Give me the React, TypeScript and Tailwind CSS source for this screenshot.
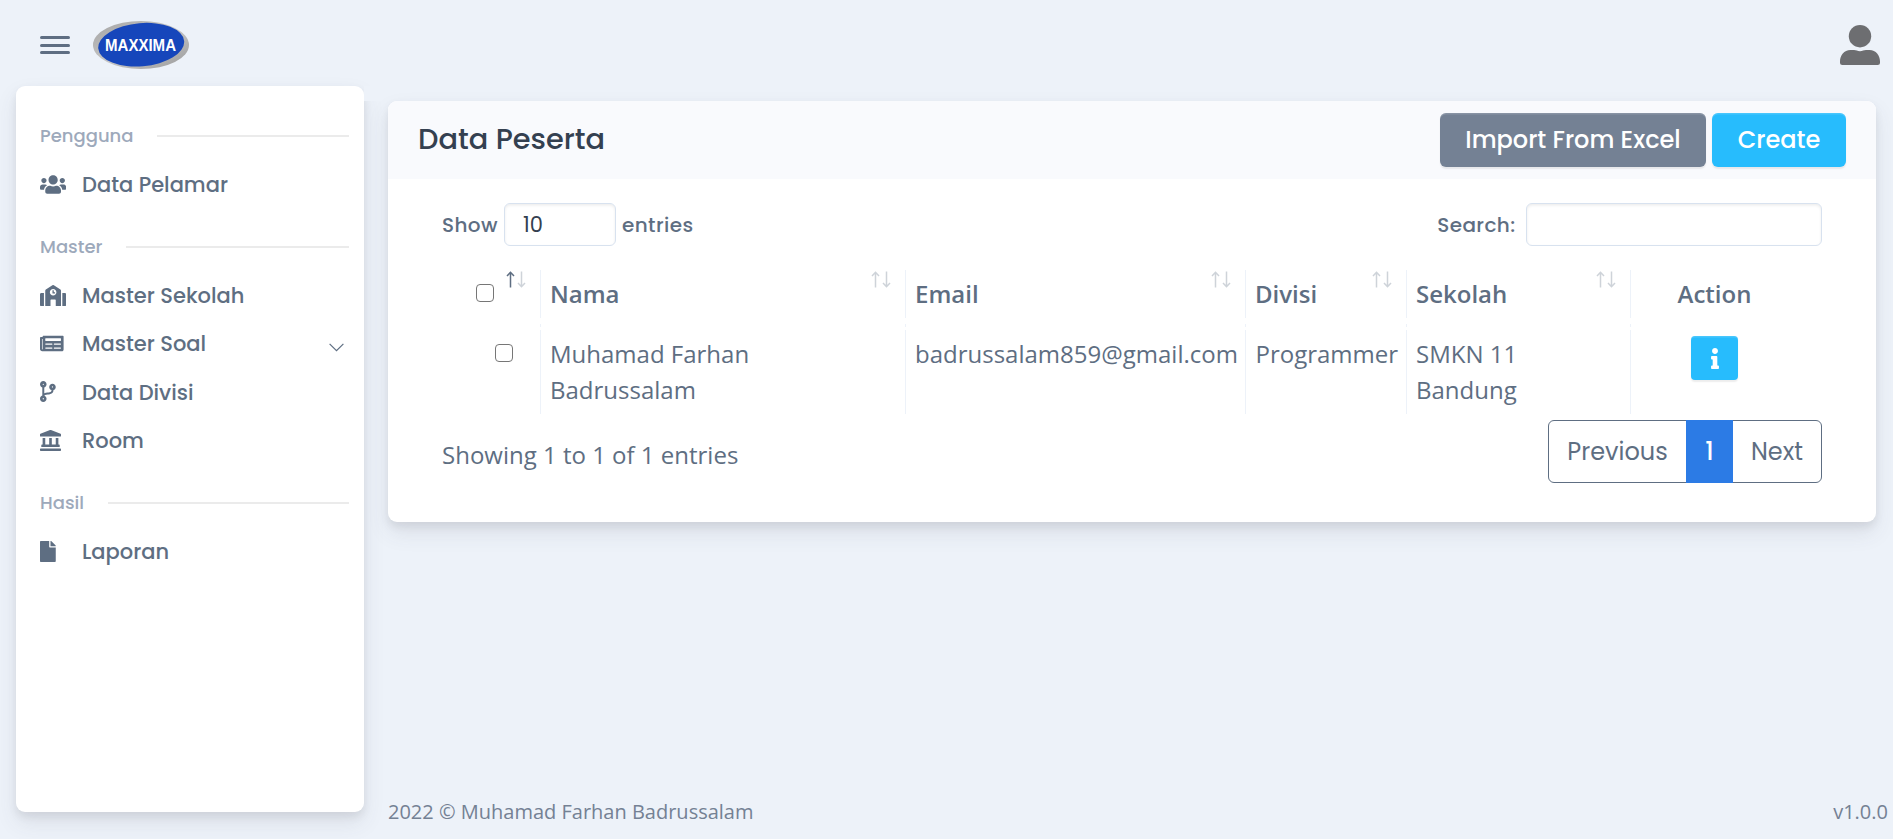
import React from "react";
import type { IconType } from "react-icons";
import { FaUsers, FaSchool, FaNewspaper, FaCodeBranch, FaLandmark, FaFile, FaInfo } from "react-icons/fa";

const display = "font-['Poppins','Inter',sans-serif]";

function Logo() {
  return (
    <svg width="96" height="48" viewBox="0 0 96 48">
      <defs>
        <linearGradient id="ring" x1="0" y1="0" x2="1" y2="1">
          <stop offset="0" stopColor="#a3a3a3" />
          <stop offset="0.5" stopColor="#c6c6c6" />
          <stop offset="1" stopColor="#9a9a9a" />
        </linearGradient>
      </defs>
      <ellipse cx="48" cy="24" rx="48" ry="24" fill="url(#ring)" />
      <ellipse cx="48.2" cy="23.7" rx="43.1" ry="21.6" transform="rotate(-5 48.2 23.7)" fill="#1646bb" />
      <text x="47.5" y="29.6" textAnchor="middle" fill="#fff" fontFamily="Liberation Sans, sans-serif" fontWeight="700" fontSize="15.6" textLength="71" lengthAdjust="spacingAndGlyphs">
        MAXXIMA
      </text>
    </svg>
  );
}

function NavLabel({ text }: { text: string }) {
  return (
    <div className="flex h-[30px] items-center">
      <span className="text-[18px] font-medium text-[#9da9bb]">{text}</span>
      <span className="ml-6 h-[2px] grow bg-[#ebebeb]" />
    </div>
  );
}

function NavItem({ icon: Icon, text, size, open }: { icon: IconType; text: string; size: string; open?: boolean }) {
  return (
    <div className="flex h-[48.33px] items-center text-[#5e6e82]">
      <span className="mb-[2px] w-[42px] shrink-0">
        <Icon className={`h-[21px] ${size}`} />
      </span>
      <span className="text-[21px] font-medium">{text}</span>
      {open && (
        <svg className="mt-[6px] mr-[5px] ml-auto" width="15" height="9" viewBox="0 0 15 9" fill="none" stroke="currentColor" strokeWidth="1.2">
          <path d="M.6.8 7.5 7.7 14.4.8" />
        </svg>
      )}
    </div>
  );
}

function Sort({ active }: { active?: boolean }) {
  return (
    <svg className="absolute top-px right-[14px]" width="20" height="17" viewBox="0 0 20 17" fill="none" stroke="#5e6e82" strokeWidth="1.5">
      <path d="M4.5 16.5V1.5M1 5 4.5 1.3 8 5" opacity={active ? 1 : 0.3} />
      <path d="M15.5 .5V15.5M12 12 15.5 15.7 19 12" opacity="0.3" />
    </svg>
  );
}

const cols = "grid grid-cols-[99px_365px_340px_161px_224px_167px]";
const cell = "relative border-r border-[#edf2f9] py-[6px] pl-[9px]";
const box = "block h-[18px] w-[18px] appearance-none rounded-[4px] border-[1.5px] border-[#767676] bg-white";

function Header({ text }: { text: string }) {
  return (
    <div className={cell}>
      {text}
      <Sort />
    </div>
  );
}

export default function App() {
  return (
    <div className="flex h-[839px] w-[1893px] flex-col overflow-hidden bg-[#edf2f9] font-['Open_Sans',sans-serif] text-[24px] leading-[36px] text-[#5e6e82]">
      <header className="flex h-[86px] shrink-0 items-start pr-[13px] pl-10">
        <button className="mt-9 flex h-[18px] w-[30px] flex-col justify-between">
          <span className="h-[3px] w-full rounded-full bg-[#5e6e82]" />
          <span className="h-[3px] w-full rounded-full bg-[#5e6e82]" />
          <span className="h-[3px] w-full rounded-full bg-[#5e6e82]" />
        </button>
        <div className="mt-[21px] ml-[23px]">
          <Logo />
        </div>
        <svg className="mt-[25px] ml-auto" width="40" height="40" viewBox="0 0 40 40" fill="#6d6e71">
          <circle cx="20" cy="11.2" r="11.2" />
          <path d="M10.5 25H14c2.3 0 3.3 1.2 6 1.2S23.700 25 26 25h3.500C36 25 40 30.500 40 36.500V37.500Q40 40 37.500 40H2.500Q0 40 0 37.500V36.500C0 30.500 4 25 10.500 25Z" />
        </svg>
      </header>

      <div className="flex grow">
        <aside className={`ml-4 h-[726px] w-[348px] shrink-0 rounded-[9px] bg-white pt-[35px] pr-[15px] pl-6 shadow-[0_10.5px_21px_0_rgba(65,69,88,0.1),0_4.5px_9px_0_rgba(0,0,0,0.07)] ${display}`}>
          <NavLabel text="Pengguna" />
          <div className="pt-[10px] pb-[22.67px]">
            <NavItem icon={FaUsers} text="Data Pelamar" size="w-[26.25px]" />
          </div>
          <NavLabel text="Master" />
          <div className="pt-[10px] pb-[22.67px]">
            <NavItem icon={FaSchool} text="Master Sekolah" size="w-[26.25px]" />
            <NavItem icon={FaNewspaper} text="Master Soal" size="w-[23.6px]" open />
            <NavItem icon={FaCodeBranch} text="Data Divisi" size="w-[15.75px]" />
            <NavItem icon={FaLandmark} text="Room" size="w-[21px]" />
          </div>
          <NavLabel text="Hasil" />
          <div className="pt-[10px]">
            <NavItem icon={FaFile} text="Laporan" size="w-[15.75px]" />
          </div>
        </aside>

        <div className="flex grow flex-col">
          <div className="h-[15px] shrink-0 bg-[#edf2f9]" />
          <main className="ml-6 h-[421px] w-[1488px] rounded-[9px] bg-white shadow-[0_10.5px_21px_0_rgba(65,69,88,0.1),0_4.5px_9px_0_rgba(0,0,0,0.07)]">
            <div className={`flex h-[78px] items-center rounded-t-[9px] bg-[#f9fafd] px-[30px] ${display}`}>
              <h5 className="mb-[2px] text-[28.8px] font-medium text-[#344050]">Data Peserta</h5>
              <button className="ml-auto h-[54px] w-[266px] rounded-[6px] bg-[#748194] font-medium whitespace-nowrap text-white shadow-[inset_0_1.5px_0_rgba(255,255,255,0.15),0_1.5px_1.5px_rgba(0,0,0,0.075)]">Import From Excel</button>
              <button className="ml-[6px] h-[54px] w-[134px] rounded-[6px] bg-[#27bcfd] font-medium text-white shadow-[inset_0_1.5px_0_rgba(255,255,255,0.15),0_1.5px_1.5px_rgba(0,0,0,0.075)]">Create</button>
            </div>

            <div className="px-[54px] pt-6">
              <div className={`flex h-[43px] items-center text-[20px] font-medium tracking-[0.4px] ${display}`}>
                <span className="w-[62px]">Show</span>
                <span className="flex h-[43px] w-[112px] items-center rounded-[6px] border border-[#d8e2ef] pl-[18px] text-[21px] font-normal tracking-normal text-[#344050] shadow-[inset_0_1.5px_3px_rgba(0,0,0,0.075)]">10</span>
                <span className="ml-[6px]">entries</span>
                <span className="ml-auto">Search:</span>
                <input className="ml-[10.5px] h-[43px] w-[296px] rounded-[6px] border border-[#d8e2ef] shadow-[inset_0_1.5px_3px_rgba(0,0,0,0.075)]" />
              </div>

              <div className={`${cols} mt-6 h-[48px] font-semibold`}>
                <div className={cell}>
                  <input type="checkbox" className={`${box} mt-2 ml-[25px]`} />
                  <Sort active />
                </div>
                <Header text="Nama" />
                <Header text="Email" />
                <Header text="Divisi" />
                <Header text="Sekolah" />
                <div className="py-[6px] text-center">Action</div>
              </div>
              <div className={`${cols} mt-[6px] mb-[3px] h-[3px]`}>
                {[0, 1, 2, 3, 4].map((i) => (
                  <div key={i} className="border-r border-[#edf2f9]" />
                ))}
              </div>
              <div className={`${cols} h-[84px]`}>
                <div className={cell}>
                  <input type="checkbox" className={`${box} mt-2 ml-[44px]`} />
                </div>
                <div className={cell}>Muhamad Farhan<br />Badrussalam</div>
                <div className={cell}>badrussalam859@gmail.com</div>
                <div className={`${cell} indent-[0.5px]`}>Programmer</div>
                <div className={cell}>SMKN 11<br />Bandung</div>
                <div className="flex justify-center py-[6px]">
                  <button className="flex h-[44px] w-[47px] items-center justify-center rounded-[4px] bg-[#27bcfd] text-white shadow-[inset_0_1.5px_0_rgba(255,255,255,0.15),0_1.5px_1.5px_rgba(0,0,0,0.075)]">
                    <FaInfo className="h-[21px] w-[8px]" />
                  </button>
                </div>
              </div>

              <div className="flex justify-between pt-[6px]">
                <div className="pt-[17px]">Showing 1 to 1 of 1 entries</div>
                <div className={`flex h-[63px] w-[274px] items-stretch rounded-[6px] border border-[#5e6e82] leading-[61px] ${display}`}>
                  <span className="w-[137px] text-center">Previous</span>
                  <span className="-my-px w-[47px] bg-[#2c7be5] text-center leading-[63px] font-medium text-white">1</span>
                  <span className="grow text-center">Next</span>
                </div>
              </div>
            </div>
          </main>
          <footer className="mt-auto mb-[9px] ml-6 flex justify-between pr-[5px] text-[20px] text-[#748194]">
            <span>2022 © Muhamad Farhan Badrussalam</span>
            <span>v1.0.0</span>
          </footer>
        </div>
      </div>
    </div>
  );
}
